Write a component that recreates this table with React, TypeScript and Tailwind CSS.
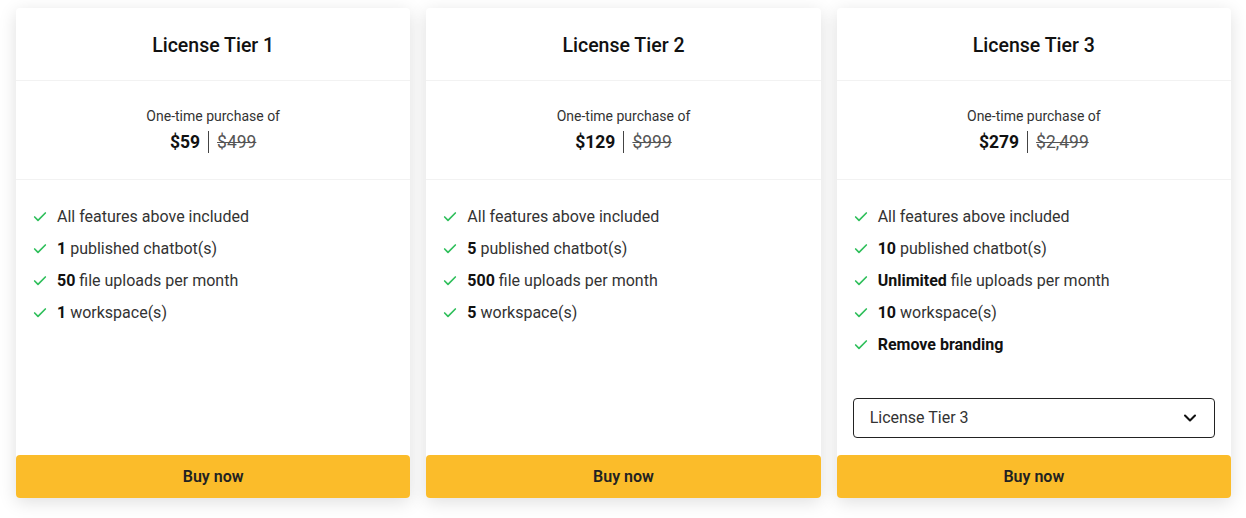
import { Check, ChevronDown } from 'lucide-react';

type Feature = { bold?: string; text: string };

type Tier = {
  name: string;
  price: string;
  oldPrice: string;
  features: Feature[];
  select?: boolean;
};

const TIERS: Tier[] = [
  {
    name: 'License Tier 1',
    price: '$59',
    oldPrice: '$499',
    features: [
      { text: 'All features above included' },
      { bold: '1', text: ' published chatbot(s)' },
      { bold: '50', text: ' file uploads per month' },
      { bold: '1', text: ' workspace(s)' },
    ],
  },
  {
    name: 'License Tier 2',
    price: '$129',
    oldPrice: '$999',
    features: [
      { text: 'All features above included' },
      { bold: '5', text: ' published chatbot(s)' },
      { bold: '500', text: ' file uploads per month' },
      { bold: '5', text: ' workspace(s)' },
    ],
  },
  {
    name: 'License Tier 3',
    price: '$279',
    oldPrice: '$2,499',
    features: [
      { text: 'All features above included' },
      { bold: '10', text: ' published chatbot(s)' },
      { bold: 'Unlimited', text: ' file uploads per month' },
      { bold: '10', text: ' workspace(s)' },
      { bold: 'Remove branding', text: '' },
    ],
    select: true,
  },
];

const TierCard = ({ tier }: { tier: Tier }) => (
  <div className="flex h-[490px] flex-col rounded bg-white shadow-[0_4px_18px_rgba(0,0,0,0.13)]">
    <div className="flex h-[73px] items-center justify-center border-b border-[#f2f2f2] pt-[3px] text-[19.5px] font-medium text-[#111]">
      {tier.name}
    </div>
    <div className="flex h-[99px] flex-col items-center justify-center border-b border-[#f2f2f2] pt-[2px]">
      <span className="text-[14px] leading-5 text-[#333]">One-time purchase of</span>
      <div className="mt-[2px] flex items-center gap-2 text-[17.5px] leading-7">
        <span className="font-bold text-[#111]">{tier.price}</span>
        <span className="h-[22px] w-px bg-[#444]" />
        <span className="text-[#555] line-through">{tier.oldPrice}</span>
      </div>
    </div>
    <ul className="flex flex-1 flex-col px-4 pt-[21px]">
      {tier.features.map((f, i) => (
        <li key={i} className="flex h-8 items-center gap-[9px] text-[16px] text-[#333]">
          <Check size={16} strokeWidth={2.5} className="text-[#2fbf5b]" />
          <span>
            {f.bold && <b className="font-bold text-[#111]">{f.bold}</b>}
            {f.text}
          </span>
        </li>
      ))}
    </ul>
    {tier.select && (
      <div className="mx-4 mb-[17px] flex h-10 items-center justify-between rounded border border-[#222] pl-4 pr-[14px] text-[16px] text-[#333]">
        <span>{tier.name}</span>
        <ChevronDown size={20} strokeWidth={2.5} className="text-[#111]" />
      </div>
    )}
    <button className="h-[43px] rounded bg-[#fbbc2a] text-[16px] font-semibold text-[#222]">
      Buy now
    </button>
  </div>
);

export default function App() {
  return (
    <div className="min-h-[518px] bg-white pl-4 pr-[15px] pt-2 font-['Roboto',sans-serif]">
      <div className="grid grid-cols-3 gap-x-4">
        {TIERS.map((t) => (
          <TierCard key={t.name} tier={t} />
        ))}
      </div>
    </div>
  );
}
